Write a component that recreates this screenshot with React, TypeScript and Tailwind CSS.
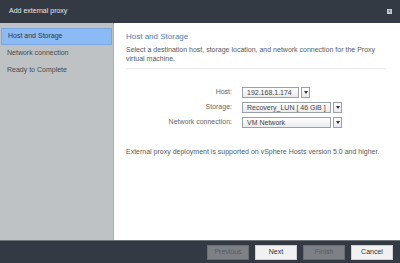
import React from "react";

const font = { fontFamily: '"Liberation Sans", Arial, sans-serif' };

function Select({ value, width }: { value: string; width: string }) {
  return (
    <div className="flex items-center gap-[2px]">
      <div
        className={`${width} h-[11px] border border-[#9aa0a6] bg-gradient-to-b from-[#ffffff] to-[#e9eaec] text-[7px] leading-[9px] text-[#444] pl-[4px] whitespace-nowrap overflow-hidden`}
      >
        {value}
      </div>
      <div className="w-[9px] h-[11px] border border-[#9aa0a6] bg-gradient-to-b from-[#ffffff] to-[#e9eaec] flex items-center justify-center">
        <div className="w-0 h-0 border-l-[2px] border-r-[2px] border-t-[3px] border-l-transparent border-r-transparent border-t-[#333]" />
      </div>
    </div>
  );
}

function Btn({ label, disabled }: { label: string; disabled?: boolean }) {
  return (
    <div
      className={`w-[42px] h-[15px] flex items-center justify-center text-[7px] border ${
        disabled
          ? "bg-[#7d8186] border-[#6a6f75] text-[#575c63]"
          : "bg-[#f1f1f1] border-[#d0d0d0] text-[#333]"
      }`}
    >
      {label}
    </div>
  );
}

export default function App() {
  return (
    <div style={font} className="w-[400px] h-[263px] flex flex-col bg-white overflow-hidden">
      <div className="h-[23px] bg-[#343a44] flex items-center justify-between pl-[9px] pr-[8px]">
        <span className="text-[7px] text-[#e6e8ea]">Add external proxy</span>
        <div className="w-[5px] h-[5px] bg-[#c9cbce] flex items-center justify-center text-[5px] leading-none text-[#343a44]">
          ×
        </div>
      </div>
      <div className="flex-1 flex min-h-0">
        <div className="w-[114px] bg-[#bec2c5] border-r border-[#a9adb1] pt-[5px] flex flex-col">
          <div className="mx-[1px] h-[17px] bg-[#8cbaf5] border border-[#79a7e3] flex items-center pl-[6px] text-[7px] text-[#2f3640]">
            Host and Storage
          </div>
          <div className="h-[17px] flex items-center pl-[7px] text-[7px] text-[#444a52]">Network connection</div>
          <div className="h-[17px] flex items-center pl-[7px] text-[7px] text-[#444a52]">Ready to Complete</div>
        </div>
        <div className="flex-1 flex flex-col pl-[12px] pr-[14px] pt-[9px]">
          <div className="text-[8px] leading-[10px] text-[#4a7db5]">Host and Storage</div>
          <div className="mt-[3px] text-[7px] leading-[9px] text-[#555b62] pr-[2px]">
            Select a destination host, storage location, and network connection for the Proxy virtual machine.
          </div>
          <div className="mt-[5px] h-px bg-[#e8e9eb]" />
          <div className="mt-[18px] grid grid-cols-[106px_auto] gap-x-[10px] gap-y-[4px] items-center">
            <div className="text-right text-[7px] text-[#666]">Host:</div>
            <Select value="192.168.1.174" width="w-[57px]" />
            <div className="text-right text-[7px] text-[#666]">Storage:</div>
            <Select value="Recovery_LUN [ 46 GiB ]" width="w-[89px]" />
            <div className="text-right text-[7px] text-[#666]">Network connection:</div>
            <Select value="VM Network" width="w-[89px]" />
          </div>
          <div className="mt-[19px] text-[7px] text-[#555b62] whitespace-nowrap">
            External proxy deployment is supported on vSphere Hosts version 5.0 and higher.
          </div>
        </div>
      </div>
      <div className="h-[23px] bg-[#343a44] border-t border-[#6f747a] flex items-center justify-end gap-[6px] pr-[7px]">
        <Btn label="Previous" disabled />
        <Btn label="Next" />
        <Btn label="Finish" disabled />
        <Btn label="Cancel" />
      </div>
    </div>
  );
}
